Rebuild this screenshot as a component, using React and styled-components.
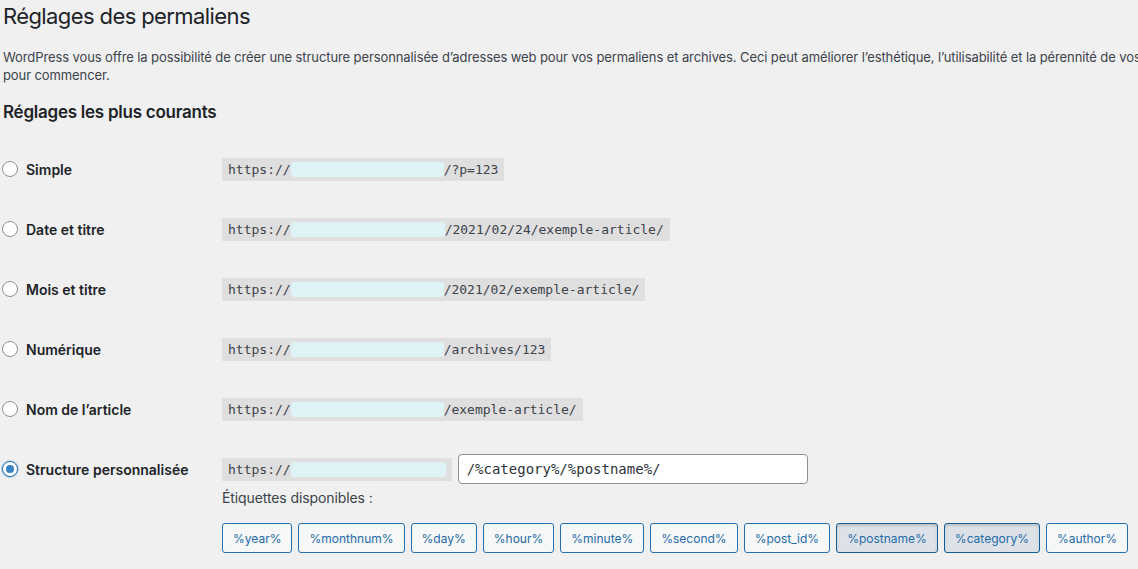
import React from "react";
import styled, { createGlobalStyle, css } from "styled-components";

const GlobalStyle = createGlobalStyle`
  html, body {
    margin: 0;
    padding: 0;
    background: #f0f0f1;
    overflow: hidden;
  }
  body {
    font-family: Inter, "Noto Sans", "Liberation Sans", sans-serif;
    color: #3c434a;
    font-size: 13px;
  }
  * { box-sizing: border-box; }
`;

const Wrap = styled.div`
  padding: 0 0 0 3px;
  width: 1138px;
  height: 569px;
`;

const Title = styled.h1`
  margin: 0;
  padding-top: 2px;
  font-size: 22px;
  letter-spacing: -0.6px;
  line-height: 29px;
  font-weight: 400;
  color: #1d2327;
`;

const Intro = styled.p`
  margin: 17px 0 0;
  line-height: 18px;
  font-size: 13px;
  letter-spacing: -0.1px;
`;

const Line = styled.span`
  display: block;
  white-space: nowrap;
`;

const Heading = styled.h2`
  margin: 16px 0 0;
  font-size: 17px;
  letter-spacing: -0.25px;
  line-height: 24px;
  font-weight: 600;
  color: #1d2327;
`;

const Table = styled.div`
  margin-top: 15px;
  display: grid;
  grid-template-columns: 219px 1fr;
`;

const Label = styled.label`
  display: flex;
  align-items: center;
  gap: 8px;
  height: 60px;
  padding: 15px 0;
  font-size: 14px;
  font-weight: 600;
  color: #1d2327;
  align-self: start;
`;

const Radio = styled.span`
  width: 16px;
  height: 16px;
  margin-left: -1px;
  border-radius: 50%;
  border: 1px solid ${(p) => (p.$checked ? "#2271b1" : "#8c8f94")};
  background: #fff;
  display: flex;
  align-items: center;
  justify-content: center;
  flex: none;
  ${(p) =>
    p.$checked &&
    css`
      box-shadow: 0 0 0 1px rgba(34, 113, 177, 0.25);
      &::before {
        content: "";
        width: 8px;
        height: 8px;
        border-radius: 50%;
        background: #3582c4;
      }
    `}
`;

const Cell = styled.div`
  padding: 15px 0;
  display: flex;
  flex-direction: column;
`;

const UrlLine = styled.div`
  height: 30px;
  display: flex;
  align-items: center;
  gap: 6px;
`;

const Code = styled.code`
  display: inline-flex;
  align-items: center;
  height: 23px;
  padding: 0 6px;
  background: rgba(0, 0, 0, 0.07);
  font-family: "DejaVu Sans Mono", "Liberation Mono", monospace;
  font-size: 13px;
  color: #3c434a;
  white-space: pre;
`;

/* masked domain part of the site address */
const Host = styled.span`
  display: inline-block;
  width: ${(p) => p.$w}px;
  height: 15px;
  border-radius: 3px;
  background: #dff3f6;
  filter: blur(0.6px);
`;

const Input = styled.input`
  width: 350px;
  height: 30px;
  padding: 0 8px;
  border: 1px solid #8c8f94;
  border-radius: 4px;
  background: #fff;
  font-family: "DejaVu Sans Mono", "Liberation Mono", monospace;
  font-size: 14px;
  color: #2c3338;
  outline: none;
`;

const Hint = styled.div`
  margin-top: 5px;
  font-size: 14px;
  line-height: 18px;
  letter-spacing: -0.1px;
  color: #3c434a;
`;

const Tags = styled.ul`
  list-style: none;
  margin: 16px 0 0;
  padding: 0;
  display: flex;
  gap: 6px;
`;

const TagButton = styled.button`
  height: 30px;
  padding: 0 10px;
  border: 1px solid ${(p) => (p.$active ? "#135e96" : "#2271b1")};
  border-radius: 3px;
  background: ${(p) => (p.$active ? "#dde2e8" : "#f6f7f7")};
  box-shadow: ${(p) =>
    p.$active ? "inset 0 2px 5px -3px rgba(0,0,0,0.5)" : "none"};
  color: #1f6aa8;
  font-family: inherit;
  font-size: 12px;
  white-space: nowrap;
  cursor: pointer;
`;

const rows = [
  { label: "Simple", host: 153, tail: "/?p=123" },
  { label: "Date et titre", host: 154, tail: "/2021/02/24/exemple-article/" },
  { label: "Mois et titre", host: 153, tail: "/2021/02/exemple-article/" },
  { label: "Numérique", host: 153, tail: "/archives/123" },
  { label: "Nom de l’article", host: 153, tail: "/exemple-article/" },
];

const tags = [
  "%year%",
  "%monthnum%",
  "%day%",
  "%hour%",
  "%minute%",
  "%second%",
  "%post_id%",
  "%postname%",
  "%category%",
  "%author%",
];
const activeTags = ["%postname%", "%category%"];

export default function App() {
  return (
    <>
      <GlobalStyle />
      <Wrap>
        <Title>Réglages des permaliens</Title>
        <Intro>
          <Line>
            WordPress vous offre la possibilité de créer une structure personnalisée d’adresses web pour vos permaliens et archives. Ceci peut améliorer l’esthétique, l’utilisabilité et la pérennité de vos liens. De nombreuses étiquettes sont disponibles, et voici quelques exemples
          </Line>
          <Line>pour commencer.</Line>
        </Intro>
        <Heading>Réglages les plus courants</Heading>
        <Table>
          {rows.map((r) => (
            <React.Fragment key={r.label}>
              <Label>
                <Radio />
                {r.label}
              </Label>
              <Cell>
                <UrlLine>
                  <Code>
                    https://<Host $w={r.host} />
                    {r.tail}
                  </Code>
                </UrlLine>
              </Cell>
            </React.Fragment>
          ))}
          <Label>
            <Radio $checked />
            Structure personnalisée
          </Label>
          <Cell>
            <UrlLine>
              <Code>
                https://<Host $w={155} />
              </Code>
              <Input readOnly value="/%category%/%postname%/" />
            </UrlLine>
            <Hint>Étiquettes disponibles :</Hint>
            <Tags>
              {tags.map((t) => (
                <li key={t}>
                  <TagButton $active={activeTags.includes(t)}>{t}</TagButton>
                </li>
              ))}
            </Tags>
          </Cell>
        </Table>
      </Wrap>
    </>
  );
}
